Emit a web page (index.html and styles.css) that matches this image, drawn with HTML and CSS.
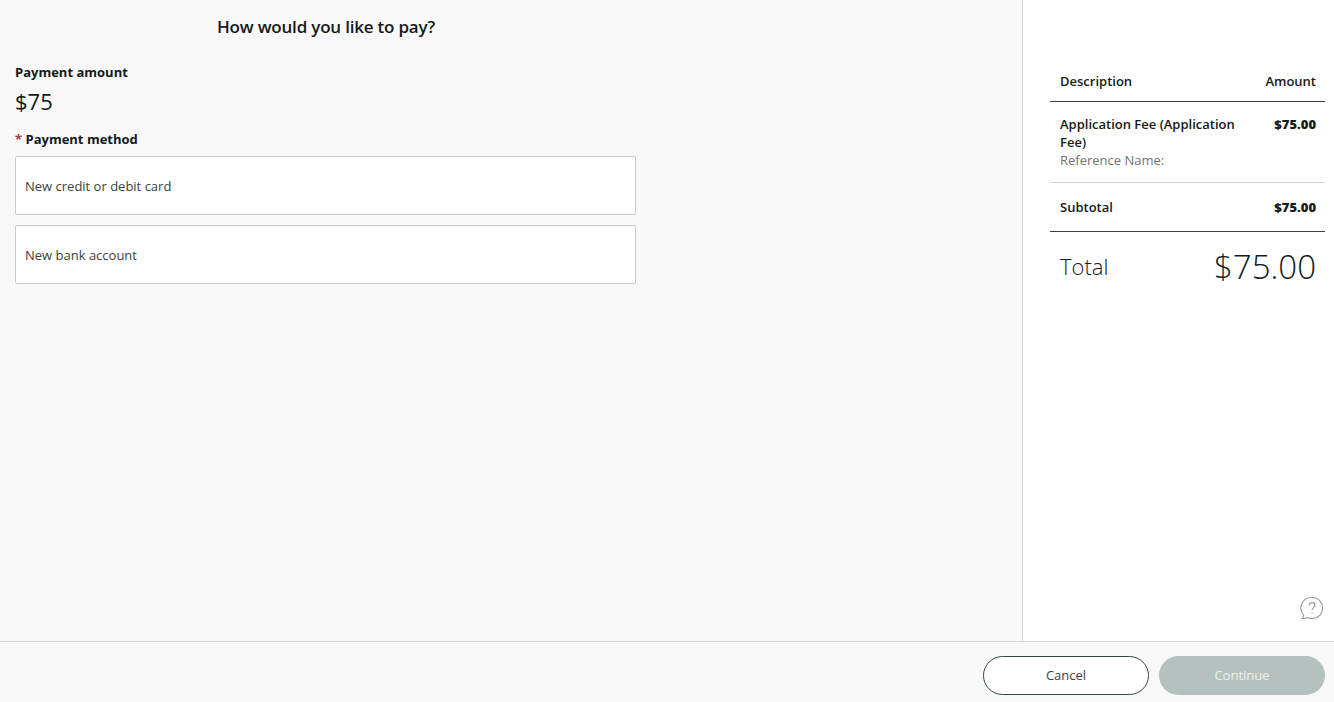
FILE: index.html
```html
<!DOCTYPE html>
<html lang="en">
<head>
  <meta charset="UTF-8" />
  <title>Payment</title>
  <link rel="stylesheet" href="styles.css">
</head>
<body>
  <div class="main">
    <div class="left">
      <div class="pay-form">
        <h1>How would you like to pay?</h1>
        <div class="field-label">Payment amount</div>
        <div class="amount">$75</div>
        <div class="field-label method-label"><span class="req">*</span> Payment method</div>
        <div class="option">New credit or debit card</div>
        <div class="option">New bank account</div>
      </div>
    </div>

    <div class="right">
      <div class="row head">
        <span>Description</span>
        <span>Amount</span>
      </div>
      <div class="row item">
        <div class="item-text">
          <div class="item-name">Application Fee (Application Fee)</div>
          <div class="item-ref">Reference Name:</div>
        </div>
        <strong>$75.00</strong>
      </div>
      <div class="row subtotal">
        <span>Subtotal</span>
        <strong>$75.00</strong>
      </div>
      <div class="row total">
        <span class="total-label">Total</span>
        <span class="total-value">$75.00</span>
      </div>
      <div class="help">
        <svg width="24" height="24" viewBox="0 0 24 24" fill="none" stroke="#9a9e9d" stroke-width="1.1">
          <path d="M12 1.5a10.5 10.5 0 1 1-4.6 19.9c-1.6.9-3.4 1.2-5.2 1 .9-.9 1.4-2 1.5-3.3A10.5 10.5 0 0 1 12 1.5z" />
          <path d="M9.2 9.4c0-1.7 1.3-2.8 2.9-2.8s2.8 1 2.8 2.5c0 2.4-2.8 2.5-2.8 5" />
          <path d="M12.1 16.4v1.3" />
        </svg>
      </div>
    </div>
  </div>

  <div class="footer">
    <button class="btn cancel">Cancel</button>
    <button class="btn continue">Continue</button>
  </div>
</body>
</html>
```

FILE: styles.css
```css
* {
  box-sizing: border-box;
}

body {
  font-family: 'Open Sans', sans-serif;
  margin: 0;
  height: 702px;
  overflow: hidden;
  background: #f8f8f8;
  color: #151918;
  display: flex;
  flex-direction: column;
}

.main {
  display: flex;
  height: 642px;
  border-bottom: 1px solid #d4d6d5;
}

.left {
  width: 1023px;
  border-right: 1px solid #d4d6d5;
  padding: 14px 0 0 15px;
}

.pay-form {
  width: 622px;
}

h1 {
  margin: 0 0 23px;
  font-size: 17px;
  line-height: 25px;
  font-weight: 600;
  letter-spacing: -0.2px;
  text-align: center;
}

.field-label {
  font-size: 13px;
  line-height: 20px;
  font-weight: 700;
}

.amount {
  font-size: 22px;
  line-height: 30px;
  margin-top: 4px;
}

.method-label {
  margin-top: 13px;
  margin-bottom: 7px;
}

.req {
  color: #b23a3a;
}

.option {
  display: flex;
  align-items: center;
  width: 621px;
  height: 59px;
  margin-bottom: 10px;
  padding: 0 9px;
  background: #fff;
  border: 1px solid #c9cbca;
  border-radius: 2px;
  font-size: 13px;
  color: #3c4241;
}

.right {
  flex: 1;
  background: #fff;
  padding: 62px 9px 0 27px;
  position: relative;
}

.row {
  display: flex;
  justify-content: space-between;
  padding: 0 9px 0 10px;
  font-size: 13px;
}

.head {
  height: 40px;
  line-height: 38px;
  border-bottom: 1px solid #3c4241;
  font-weight: 600;
}

.item {
  padding-top: 13px;
  height: 81px;
  line-height: 18px;
  border-bottom: 1px solid #d4d6d5;
  font-weight: 600;
}

.item-text {
  width: 190px;
}

.item-ref {
  font-weight: 400;
  color: #6e7372;
}

.subtotal {
  height: 49px;
  line-height: 48px;
  border-bottom: 1px solid #3c4241;
  font-weight: 600;
}

.total {
  align-items: center;
  height: 71px;
  padding-bottom: 3px;
  font-weight: 300;
}

.total-label {
  font-size: 22px;
}

.total-value {
  font-size: 33px;
}

.help {
  position: absolute;
  right: 10px;
  bottom: 21px;
  width: 24px;
  height: 24px;
}

.footer {
  flex: 1;
  display: flex;
  justify-content: flex-end;
  align-items: flex-start;
  gap: 10px;
  padding: 14px 9px 0 0;
}

.btn {
  width: 166px;
  height: 39px;
  padding-bottom: 2px;
  border-radius: 20px;
  font-family: inherit;
  font-size: 13px;
}

.cancel {
  background: #fff;
  border: 1px solid #2f4a45;
  color: #3c4241;
}

.continue {
  background: #b4c1be;
  border: none;
  color: #eef1f0;
}
```
